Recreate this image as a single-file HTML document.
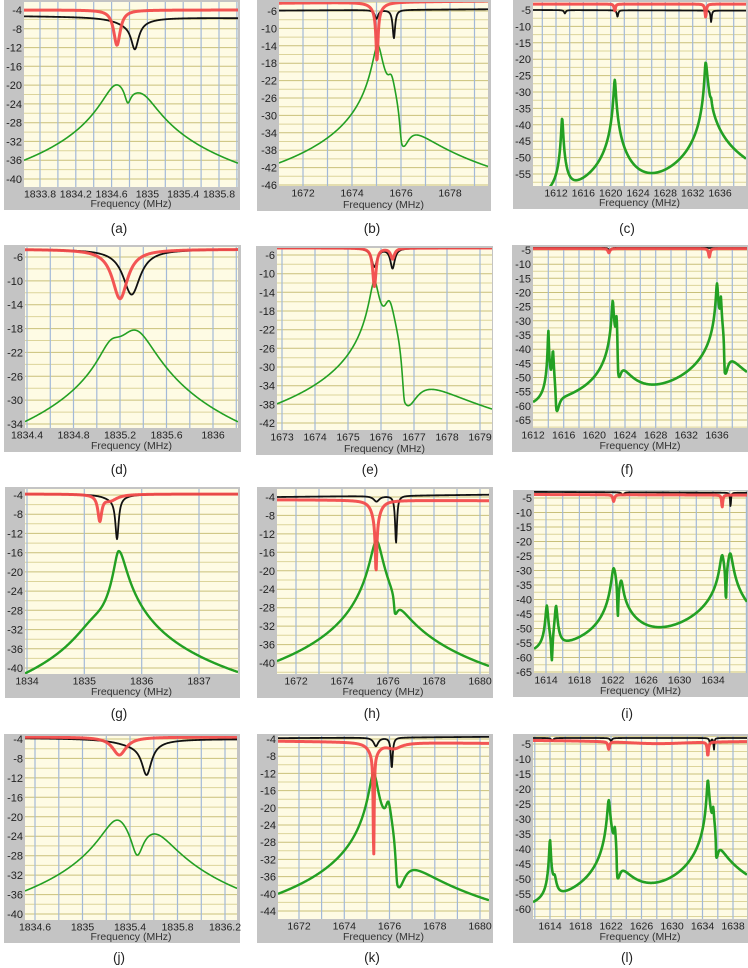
<!DOCTYPE html>
<html><head><meta charset="utf-8">
<style>
html,body{margin:0;padding:0;background:#fff;}
svg{display:block;}
text{font-family:"Liberation Sans",sans-serif;}
</style></head>
<body>
<svg id="s" width="748" height="968" viewBox="0 0 748 968" xmlns="http://www.w3.org/2000/svg"></svg>
<script>
var P=[
{n:'a',lx:119,ly:228,box:[4,0,240,210],plot:[24,2,238,187],xm:[1833.8,40,1835.8,219],ym:[-4,10,-40,179],yl:[-4,-40,-4],xl:[1833.8,1834.2,1834.6,1835,1835.4,1835.8],v0:1833.8,vs:0.2,hs:2,
 red:{b:[-4,-4],d:[[1834.66,7.5,0.045]]},blk:{b:[-5.3,-5.7],d:[[1834.86,5.5,0.05],[1834.8,1.5,0.2]]},
 grn:{p:[[1834.66,-20.3,0.14],[1834.92,-23,0.17]],d:[[1834.78,3,0.04]]}},
{n:'b',lx:372,ly:228,box:[257,0,491,211],plot:[279,2,488,186],xm:[1672,303,1678,450],ym:[-6,11,-46,185],yl:[-6,-46,-4],xl:[1672,1674,1676,1678],v0:1672,vs:1,hs:2,
 red:{b:[-4.2,-3.7],d:[[1675.02,11.5,0.05],[1675.02,2,0.25]]},blk:{b:[-5.9,-5.6],d:[[1675.0,2,0.08],[1675.71,6.5,0.06]]},
 grn:{p:[[1675.05,-13.8,0.17],[1675.6,-22,0.15]],d:[[1676.04,9.4,0.12,0.34]]}},
{n:'c',lx:627,ly:228,box:[513,0,748,209],plot:[533,2,746,186],xm:[1612,556,1636,720],ym:[-5,10,-55,174],yl:[-5,-55,-5],xl:[1612,1616,1620,1624,1628,1632,1636],v0:1612,vs:2,hs:2.5,gw:2.6,
 red:{b:[-3.2,-3.2],d:[[1620.6,2,0.12],[1633.9,4,0.12]]},blk:{b:[-5,-5.2],d:[[1613.3,1,0.15],[1621,2,0.12],[1634.7,3.5,0.1]]},
 grn:{p:[[1612.9,-38,0.11],[1620.6,-26.3,0.13],[1633.9,-21,0.125,0.2],[1634.7,-37,0.1]],d:[]}},
{n:'d',lx:119,ly:469,box:[4,245,241,452],plot:[25,247,238,428],xm:[1834.4,27,1836,213],ym:[-6,257,-34,424],yl:[-6,-34,-4],xl:[1834.4,1834.8,1835.2,1835.6,1836],v0:1834.4,vs:0.2,hs:2,
 red:{b:[-4.7,-4.7],d:[[1835.2,8.3,0.08]]},blk:{b:[-4.7,-4.7],d:[[1835.3,7.6,0.09]]},
 grn:{p:[[1835.33,-18.6,0.15],[1835.13,-22.5,0.1]],d:[]}},
{n:'e',lx:370,ly:469,box:[256,246,493,455],plot:[277,248,492,430],xm:[1673,282,1679,480],ym:[-6,255,-42,423],yl:[-6,-42,-4],xl:[1673,1674,1675,1676,1677,1678,1679],v0:1673,vs:1,hs:2,
 red:{b:[-4.5,-4.5],d:[[1675.8,8.3,0.06],[1676.35,2.3,0.07]]},blk:{b:[-4.5,-4.5],d:[[1675.8,4,0.1],[1676.35,4.3,0.08]]},
 grn:{p:[[1675.8,-11.6,0.12],[1676.25,-16,0.15]],d:[[1676.72,13,0.1,0.45]]}},
{n:'f',lx:627,ly:469,box:[512,245,748,452],plot:[533,247,747,428],xm:[1612,533,1636,717],ym:[-5,250,-65,420],yl:[-5,-65,-5],xl:[1612,1616,1620,1624,1628,1632,1636],v0:1612,vs:2,hs:2.5,gw:2.6,
 red:{b:[-4.5,-4.5],d:[[1621.9,1.5,0.15],[1635,3,0.12]]},blk:{b:[-4.2,-4.3],d:[[1622,1,0.15]]},
 grn:{p:[[1614,-33.3,0.05],[1614.6,-40,0.08],[1622.4,-22.7,0.097],[1622.9,-27,0.07],[1636,-16.7,0.1],[1636.5,-21.5,0.07]],d:[[1615.05,9,0.12,0.4],[1623.1,13,0.08,0.42],[1637,13.5,0.08,0.5]]}},
{n:'g',lx:119,ly:713,box:[5,487,240,698],plot:[25,489,238,674],xm:[1834,27,1837,199],ym:[-4,495,-40,668],yl:[-4,-40,-4],xl:[1834,1835,1836,1837],v0:1834,vs:1,hs:2,gw:2.4,
 red:{b:[-3.8,-3.8],d:[[1835.27,5.2,0.04],[1835.45,1.3,0.15]]},blk:{b:[-3.8,-3.8],d:[[1835.57,8.5,0.035],[1835.5,1,0.2]]},
 grn:{p:[[1835.6,-15.7,0.07,0.11],[1835.2,-33,0.3]],d:[]}},
{n:'h',lx:372,ly:713,box:[257,487,493,698],plot:[277,489,489,674],xm:[1672,296,1680,480],ym:[-4,497,-40,663],yl:[-4,-40,-4],xl:[1672,1674,1676,1678,1680],v0:1672,vs:1,hs:2,gw:2.4,
 red:{b:[-4.6,-4.8],d:[[1675.48,11,0.04],[1675.48,4.5,0.2]]},blk:{b:[-4,-3.5],d:[[1675.5,1.2,0.15],[1676.35,10.2,0.05]]},
 grn:{p:[[1675.5,-13.5,0.215]],d:[[1676.3,4,0.05,0.15]]}},
{n:'i',lx:627,ly:713,box:[513,490,748,697],plot:[534,491,747,673],xm:[1614,546,1634,713],ym:[-5,498,-65,672],yl:[-5,-65,-5],xl:[1614,1618,1622,1626,1630,1634],v0:1614,vs:2,hs:2.5,gw:2.6,
 red:{b:[-3.8,-4],d:[[1622.1,2.3,0.12],[1635.1,4.2,0.08]]},blk:{b:[-2.9,-3.2],d:[[1623.2,1,0.15],[1636.1,5,0.06]]},
 grn:{p:[[1614.1,-42,0.12],[1615.2,-42,0.12],[1622.1,-29,0.2,0.3],[1623.0,-34.3,0.2],[1635.1,-24.7,0.22],[1636.05,-24,0.26]],d:[[1614.7,10,0.1],[1622.6,12,0.08],[1635.55,12,0.08]]}},
{n:'j',lx:119,ly:957,box:[4,734,240,943],plot:[25,736,237,920],xm:[1834.6,35,1836.2,225],ym:[-4,739,-40,914],yl:[-4,-40,-4],xl:[1834.6,1835,1835.4,1835.8,1836.2],v0:1834.6,vs:0.2,hs:2,
 red:{b:[-3.6,-3.6],d:[[1835.31,3.7,0.07]]},blk:{b:[-3.8,-4],d:[[1835.54,6.5,0.05],[1835.45,1.2,0.2]]},
 grn:{p:[[1835.3,-20.5,0.12],[1835.59,-23.8,0.165]],d:[[1835.46,5.5,0.06]]}},
{n:'k',lx:372,ly:957,box:[257,734,493,943],plot:[278,736,489,919],xm:[1672,299,1680,480],ym:[-4,739,-44,911],yl:[-4,-44,-4],xl:[1672,1674,1676,1678,1680],v0:1672,vs:1,hs:2,gw:2.4,
 red:{b:[-4.5,-5],d:[[1675.3,24,0.025],[1675.3,3,0.25],[1676.2,1.3,0.4]]},blk:{b:[-3.8,-3.5],d:[[1675.4,2,0.12],[1676.1,7,0.05]]},
 grn:{p:[[1675.3,-11.9,0.16],[1675.95,-19,0.12]],d:[[1676.35,12,0.1,0.39]]}},
{n:'l',lx:627,ly:957,box:[513,734,748,943],plot:[533,736,747,919],xm:[1614,550,1638,733],ym:[-5,744,-60,909],yl:[-5,-60,-5],xl:[1614,1618,1622,1626,1630,1634,1638],v0:1614,vs:2,hs:2.5,gw:2.6,
 red:{b:[-3.7,-4],d:[[1621.7,2.5,0.12],[1634.7,4.6,0.1],[1628,1,6]]},blk:{b:[-3,-3],d:[[1614.3,1,0.15],[1622,1,0.15],[1635,2,0.1],[1635.5,4,0.06]]},
 grn:{p:[[1614,-37,0.083],[1614.6,-51,0.2],[1621.7,-23.7,0.144,0.15],[1622.5,-33.5,0.1],[1634.7,-17,0.105,0.13],[1635.4,-27,0.1]],d:[[1622.8,10,0.06,0.44],[1635.8,8.5,0.06,0.3]]}}
];
function L(x,x0,wl,wr){var w=(x<x0)?wl:(wr||wl);var t=(x-x0)/w;return 1/(1+t*t);}
function ev(c,x,f0,f1){
  var v;
  if(c.p&&c.p.length){var s=0;c.p.forEach(function(p){s+=Math.pow(10,p[1]/10)*L(x,p[0],p[2],p[3]);});v=10*Math.log10(s);}
  else{var t=(x-f0)/(f1-f0);v=c.b[0]+(c.b[1]-c.b[0])*t;}
  (c.d||[]).forEach(function(d){v-=d[1]*L(x,d[0],d[2],d[3]);});
  return v;
}
var out='';
P.forEach(function(p,i){
  var b=p.box,q=p.plot;
  var sx=(p.xm[3]-p.xm[1])/(p.xm[2]-p.xm[0]);
  var X=function(f){return p.xm[1]+(f-p.xm[0])*sx;};
  var F=function(x){return p.xm[0]+(x-p.xm[1])/sx;};
  var sy=(p.ym[3]-p.ym[1])/(p.ym[2]-p.ym[0]);
  var Y=function(v){return p.ym[1]+(v-p.ym[0])*sy;};
  out+='<rect x="'+b[0]+'" y="'+b[1]+'" width="'+(b[2]-b[0])+'" height="'+(b[3]-b[1])+'" fill="#c4c4c4"/>';
  out+='<rect x="'+q[0]+'" y="'+q[1]+'" width="'+(q[2]-q[0])+'" height="'+(q[3]-q[1])+'" fill="#fefbe4"/>';
  out+='<clipPath id="c'+i+'"><rect x="'+q[0]+'" y="'+q[1]+'" width="'+(q[2]-q[0])+'" height="'+(q[3]-q[1])+'"/></clipPath>';
  out+='<g clip-path="url(#c'+i+')">';
  for(var v=p.ym[0]+p.hs*20;v>p.ym[0]-300;v-=p.hs){var y=Y(v);if(y>q[1]&&y<q[3]){var r=(v-p.yl[0])/p.yl[2];var major=Math.abs(r-Math.round(r))<1e-6;out+='<line x1="'+q[0]+'" x2="'+q[2]+'" y1="'+y.toFixed(1)+'" y2="'+y.toFixed(1)+'" stroke="'+(major?'#c9c07a':'#dcd49a')+'" stroke-width="1"/>';}}
  for(var f=p.v0-p.vs*30;f<p.v0+p.vs*80;f+=p.vs){var x=X(f);if(x>q[0]+1&&x<q[2]){out+='<line x1="'+x.toFixed(1)+'" x2="'+x.toFixed(1)+'" y1="'+q[1]+'" y2="'+q[3]+'" stroke="#a3b9d8" stroke-width="1.2"/>';}}
  var f0=F(q[0]),f1=F(q[2]);
  function path(c){var s='';for(var k=0;k<=500;k++){var x=q[0]+(q[2]-q[0])*k/500;var yv=Y(ev(c,F(x),f0,f1));if(yv>q[3]+20)yv=q[3]+20;s+=(k?'L':'M')+x.toFixed(2)+' '+yv.toFixed(2);}return s;}
  out+='<path d="'+path(p.grn)+'" fill="none" stroke="#23a023" stroke-width="'+(p.gw||1.6)+'" stroke-linejoin="round"/>';
  out+='<path d="'+path(p.blk)+'" fill="none" stroke="#111" stroke-width="1.8" stroke-linejoin="round"/>';
  out+='<path d="'+path(p.red)+'" fill="none" stroke="#f24c4c" stroke-width="3" stroke-linejoin="round" opacity="0.95"/>';
  out+='</g>';
  for(var v=p.yl[0];v>=p.yl[1]-1e-6;v+=p.yl[2]){out+='<text x="'+(q[0]-2)+'" y="'+(Y(v)+4).toFixed(1)+'" font-size="11" fill="#222" text-anchor="end">'+v+'</text>';}
  p.xl.forEach(function(f){out+='<text x="'+X(f).toFixed(1)+'" y="'+(q[3]+10.5)+'" font-size="10.5" fill="#222" text-anchor="middle">'+f+'</text>';});
  out+='<text x="'+((q[0]+q[2])/2)+'" y="'+(b[3]-3)+'" font-size="10.5" fill="#333" text-anchor="middle">Frequency (MHz)</text>';
  out+='<text x="'+p.lx+'" y="'+(p.ly+5)+'" font-size="13.5" fill="#222" text-anchor="middle">('+p.n+')</text>';
});
document.getElementById('s').innerHTML=out;
</script>
</body></html>
